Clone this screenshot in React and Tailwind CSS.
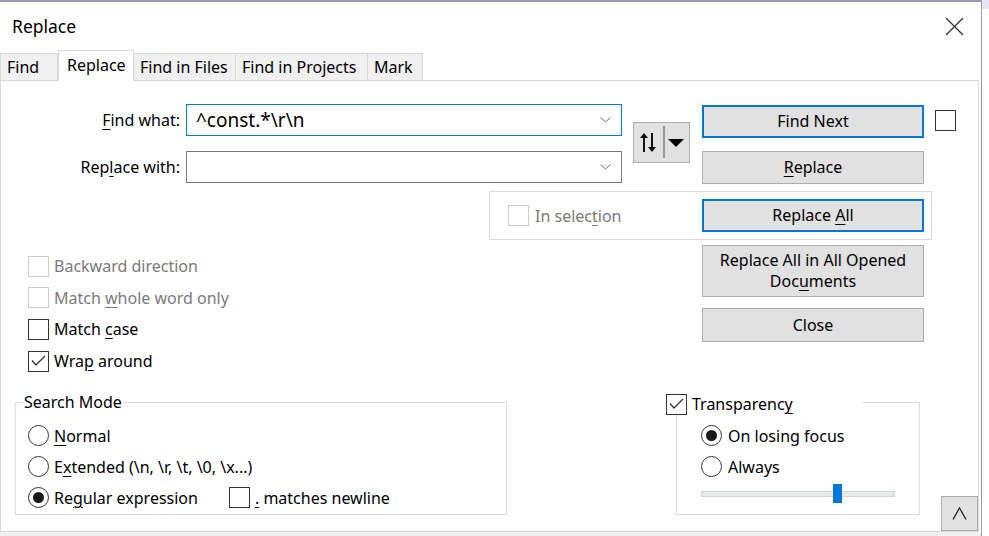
import React from 'react';

// underlined mnemonic letter
function U({ children }) {
  return <span className="underline decoration-1 underline-offset-[3px]">{children}</span>;
}

function Check({ checked, disabled }) {
  return (
    <span
      className={`w-[21px] h-[21px] border bg-white flex items-center justify-center shrink-0 ${
        disabled ? 'border-[#cccccc]' : 'border-[#333333]'
      }`}
    >
      {checked && (
        <svg width="15" height="12" viewBox="0 0 15 12">
          <polyline points="1,5.5 5,10 14,1" fill="none" stroke="#333" strokeWidth="1.3" />
        </svg>
      )}
    </span>
  );
}

function Radio({ checked }) {
  return (
    <span className="w-[21px] h-[21px] rounded-full border border-[#333333] bg-white flex items-center justify-center shrink-0">
      {checked && <span className="w-[11px] h-[11px] rounded-full bg-[#1a1a1a]" />}
    </span>
  );
}

function Btn({ children, focused, h = 'h-[33px]' }) {
  return (
    <div
      className={`w-[222px] ${h} bg-[#e1e1e1] flex items-center justify-center text-center leading-[21px] ${
        focused ? 'border-2 border-[#0078d7]' : 'border border-[#adadad]'
      }`}
    >
      {children}
    </div>
  );
}

function Combo({ value, focused }) {
  return (
    <div
      className={`w-[436px] h-[32px] bg-white border flex items-center pl-[9px] pr-[10px] ${
        focused ? 'border-[#0078d7]' : 'border-[#7a7a7a]'
      }`}
    >
      <span className="flex-1 text-[19px] leading-none">{value}</span>
      <svg width="11" height="6" viewBox="0 0 11 6">
        <polyline points="0.5,0.5 5.5,5 10.5,0.5" fill="none" stroke="#6d6d6d" strokeWidth="1" />
      </svg>
    </div>
  );
}

const tabs = [
  { label: 'Find', w: 'w-[58px]' },
  { label: 'Replace', w: 'w-[76px]', active: true },
  { label: 'Find in Files', w: 'w-[103px]' },
  { label: 'Find in Projects', w: 'w-[133px]' },
  { label: 'Mark', w: 'w-[56px]' },
];

export default function App() {
  return (
    <div className="w-[989px] h-[536px] bg-white relative overflow-hidden font-['Noto_Sans',sans-serif] text-[16px] text-black">
      {/* bit of the window behind */}
      <div className="absolute top-0 right-0 w-[7px] h-[9px] bg-[#e6e6f6]" />

      <div className="w-[982px] h-full border-t-2 border-r border-t-[#9c9abb] border-r-[#9a9a9a] flex flex-col">
        {/* title bar */}
        <div className="h-[48px] flex items-center justify-between pl-[12px] pr-[17px] shrink-0">
          <span className="text-[17.5px]">Replace</span>
          <svg width="19" height="19" viewBox="0 0 19 19">
            <line x1="1" y1="1" x2="18" y2="18" stroke="#333" strokeWidth="1.2" />
            <line x1="18" y1="1" x2="1" y2="18" stroke="#333" strokeWidth="1.2" />
          </svg>
        </div>

        {/* tabs */}
        <div className="h-[30px] flex items-end relative z-10 shrink-0">
          {tabs.map((t) =>
            t.active ? (
              <div
                key={t.label}
                className={`${t.w} h-[31px] -mb-px bg-white border border-b-0 border-[#d9d9d9] flex items-center pl-[8px] pb-[2px]`}
              >
                {t.label}
              </div>
            ) : (
              <div
                key={t.label}
                className={`${t.w} h-[27px] bg-[#f0f0f0] border border-b-0 border-[#d9d9d9] -ml-px first:ml-0 flex items-center pl-[6px]`}
              >
                {t.label}
              </div>
            )
          )}
        </div>

        {/* panel */}
        <div className="flex-1 border border-[#d9d9d9] mr-[2px] flex flex-col">
          {/* find / replace fields */}
          <div className="flex mt-[23px]">
            <div className="flex flex-col gap-[15px]">
              <div className="flex items-center">
                <span className="w-[185px] text-right pr-[6px]">
                  <U>F</U>ind what:
                </span>
                <Combo value="^const.*\r\n" focused />
              </div>
              <div className="flex items-center">
                <span className="w-[185px] text-right pr-[6px]">
                  Rep<U>l</U>ace with:
                </span>
                <Combo value="" />
              </div>
            </div>

            <div className="ml-[11px] mt-[18px] w-[57px] h-[41px] bg-[#e1e1e1] border border-[#adadad]">
              <svg width="55" height="39" viewBox="0 0 55 39">
                <line x1="10" y1="13" x2="10" y2="29" stroke="#111" strokeWidth="2" />
                <polygon points="6,15 10,10 14,15" fill="#111" />
                <line x1="18" y1="10" x2="18" y2="26" stroke="#111" strokeWidth="2" />
                <polygon points="14,24 18,29 22,24" fill="#111" />
                <line x1="30" y1="3" x2="30" y2="35" stroke="#808080" strokeWidth="1.5" />
                <polygon points="34,16 50,16 42,24" fill="#000" />
              </svg>
            </div>

            <div className="ml-[12px] flex flex-col">
              <div className="mt-[1px]">
                <Btn focused>Find Next</Btn>
              </div>
              <div className="mt-[13px]">
                <Btn>
                  <span>
                    <U>R</U>eplace
                  </span>
                </Btn>
              </div>
            </div>

            <div className="ml-[11px] mt-[6px]">
              <Check />
            </div>
          </div>

          {/* in selection */}
          <div className="mt-[7px] ml-[488px] w-[443px] h-[49px] border border-[#dcdcdc] flex items-center pl-[18px] pr-[7px]">
            <Check disabled />
            <span className="ml-[6px] text-[#7a7a7a]">
              In selec<U>t</U>ion
            </span>
            <div className="ml-auto">
              <Btn focused>
                <span>
                  Replace <U>A</U>ll
                </span>
              </Btn>
            </div>
          </div>

          {/* options + more buttons */}
          <div className="flex mt-[5px]">
            <div className="ml-[27px] w-[674px] pt-[5px] flex flex-col">
              <div className="h-[32px] flex items-center gap-[5px] text-[#7a7a7a]">
                <Check disabled />
                <span>Backward direction</span>
              </div>
              <div className="h-[31px] flex items-center gap-[5px] text-[#7a7a7a]">
                <Check disabled />
                <span>
                  Match <U>w</U>hole word only
                </span>
              </div>
              <div className="h-[32px] flex items-center gap-[5px]">
                <Check />
                <span>
                  Match <U>c</U>ase
                </span>
              </div>
              <div className="h-[32px] flex items-center gap-[5px]">
                <Check checked />
                <span>
                  Wra<U>p</U> around
                </span>
              </div>
            </div>
            <div className="flex flex-col">
              <Btn h="h-[52px]">
                <span>
                  Replace All in All Opened
                  <br />
                  Doc<U>u</U>ments
                </span>
              </Btn>
              <div className="mt-[11px]">
                <Btn h="h-[34px]">Close</Btn>
              </div>
            </div>
          </div>

          {/* bottom groups */}
          <div className="mt-auto flex items-end">
            <div className="ml-[14px] mb-[16px] w-[492px] h-[113px] border border-[#dcdcdc] relative pt-[17px] pl-[12px]">
              <span className="absolute -top-[12px] left-[7px] bg-white px-[1px] leading-[22px]">Search Mode</span>
              <div className="h-[31px] flex items-center gap-[5px]">
                <Radio />
                <span>
                  <U>N</U>ormal
                </span>
              </div>
              <div className="h-[31px] flex items-center gap-[5px]">
                <Radio />
                <span>
                  E<U>x</U>tended (\n, \r, \t, \0, \x...)
                </span>
              </div>
              <div className="h-[31px] flex items-center gap-[5px]">
                <Radio checked />
                <span>
                  Re<U>g</U>ular expression
                </span>
                <span className="ml-[26px]">
                  <Check />
                </span>
                <span>
                  <U>.</U> matches newline
                </span>
              </div>
            </div>

            <div className="ml-[169px] mb-[16px] w-[244px] h-[113px] border border-[#dcdcdc] relative pt-[17px] pl-[24px]">
              <div className="absolute -top-[10px] -left-[11px] w-[197px] bg-white flex items-center gap-[5px]">
                <Check checked />
                <span className="leading-[22px]">
                  Transparenc<U>y</U>
                </span>
              </div>
              <div className="h-[31px] flex items-center gap-[6px]">
                <Radio checked />
                <span>On losing focus</span>
              </div>
              <div className="h-[31px] flex items-center gap-[6px]">
                <Radio />
                <span>Always</span>
              </div>
              <div className="mt-[2px] w-[194px] h-[19px] relative">
                <div className="absolute top-[7px] left-0 right-0 h-[6px] bg-[#e7eaea] border border-[#d6d6d6]" />
                <div className="absolute top-0 left-[132px] w-[9px] h-[19px] bg-[#0078d7]" />
              </div>
            </div>

            <div className="ml-[21px] w-[37px] h-[35px] bg-[#e1e1e1] border border-[#adadad] flex items-center justify-center">
              <svg width="15" height="13" viewBox="0 0 15 13">
                <polyline points="1,12.5 7.5,1 14,12.5" fill="none" stroke="#222" strokeWidth="1.3" />
              </svg>
            </div>
          </div>
        </div>

        <div className="h-[4px] bg-[#f0f0f0] shrink-0" />
      </div>
    </div>
  );
}
